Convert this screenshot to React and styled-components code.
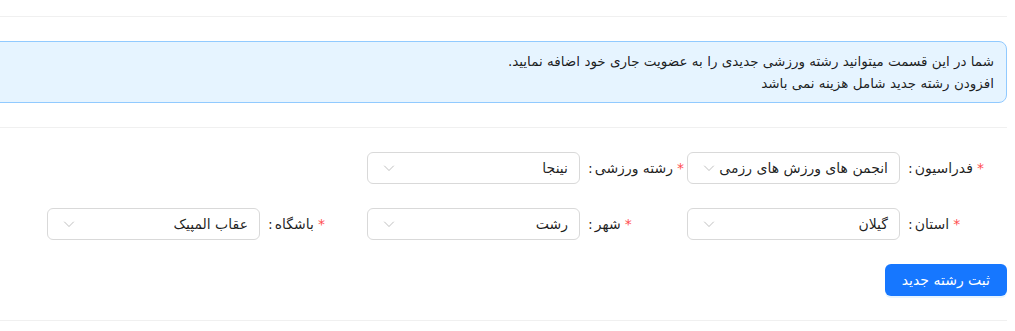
import styled, { createGlobalStyle } from "styled-components";

const GlobalStyle = createGlobalStyle`
  body {
    margin: 0;
    background: #fff;
    overflow: hidden;
    font-family: "DejaVu Sans", "Noto Sans", sans-serif;
  }
`;

const fields = [
  [
    { label: "فدراسیون", value: "انجمن های ورزش های رزمی" },
    { label: "رشته ورزشی", value: "نینجا" },
  ],
  [
    { label: "استان", value: "گیلان" },
    { label: "شهر", value: "رشت" },
    { label: "باشگاه", value: "عقاب المپیک" },
  ],
];

function Chevron() {
  return (
    <svg width="12" height="12" viewBox="0 0 12 12" fill="none">
      <path
        d="M1.5 4 L6 8.5 L10.5 4"
        stroke="rgba(0,0,0,0.25)"
        strokeWidth="1"
        strokeLinecap="round"
        strokeLinejoin="round"
      />
    </svg>
  );
}

function Field({ label, value }) {
  return (
    <Item>
      <Label>
        <Required>*</Required>
        {label}
        <Colon>:</Colon>
      </Label>
      <Select>
        <Value>{value}</Value>
        <Chevron />
      </Select>
    </Item>
  );
}

function App() {
  return (
    <>
      <GlobalStyle />
      <Page>
        <Divider $top />
        <Alert>
          <p>شما در این قسمت میتوانید رشته ورزشی جدیدی را به عضویت جاری خود اضافه نمایید.</p>
          <p>افزودن رشته جدید شامل هزینه نمی باشد</p>
        </Alert>
        <Divider />
        <Form>
          {fields.map((row, i) => (
            <Row key={i}>
              {row.map((f) => (
                <Field key={f.label} label={f.label} value={f.value} />
              ))}
            </Row>
          ))}
          <Actions>
            <Button>ثبت رشته جدید</Button>
          </Actions>
        </Form>
        <Divider />
      </Page>
    </>
  );
}

const Page = styled.div`
  direction: rtl;
  width: 1031px;
  margin-left: -24px;
  padding-top: 16px;
  color: rgba(0, 0, 0, 0.88);
  font-size: 14px;
`;

const Divider = styled.div`
  height: 0;
  border-top: 1px solid rgba(5, 5, 5, 0.06);
  margin: ${(p) => (p.$top ? "0 0 24px" : "24px 0")};
`;

const Alert = styled.div`
  background: #e6f4ff;
  border: 1px solid #91caff;
  border-radius: 8px;
  padding: 8px 12px;
  font-size: 13.5px;
  line-height: 22px;

  p {
    margin: 0;
  }
`;

const Form = styled.div`
  display: flex;
  flex-direction: column;
  gap: 24px;
`;

const Row = styled.div`
  display: flex;
`;

const Item = styled.div`
  width: 320px;
  display: flex;
  align-items: center;
`;

const Label = styled.label`
  width: 107px;
  flex-shrink: 0;
  display: flex;
  justify-content: flex-end;
  align-items: center;
  white-space: nowrap;
  line-height: 22px;
`;

const Required = styled.span`
  color: #ff4d4f;
  margin-inline-end: 4px;
`;

const Colon = styled.span`
  margin-inline-start: 2px;
  margin-inline-end: 8px;
`;

const Select = styled.div`
  width: 213px;
  height: 32px;
  box-sizing: border-box;
  border: 1px solid #d9d9d9;
  border-radius: 6px;
  padding: 0 11px 0 15px;
  display: flex;
  align-items: center;
  justify-content: space-between;
  background: #fff;
`;

const Value = styled.span`
  white-space: nowrap;
`;

const Actions = styled.div`
  display: flex;
`;

const Button = styled.button`
  height: 32px;
  padding: 4px 17px;
  border: none;
  border-radius: 6px;
  background: #1677ff;
  color: #fff;
  font-family: inherit;
  font-size: 14px;
  box-shadow: 0 2px 0 rgba(5, 145, 255, 0.1);
  cursor: pointer;
`;

export default App;
